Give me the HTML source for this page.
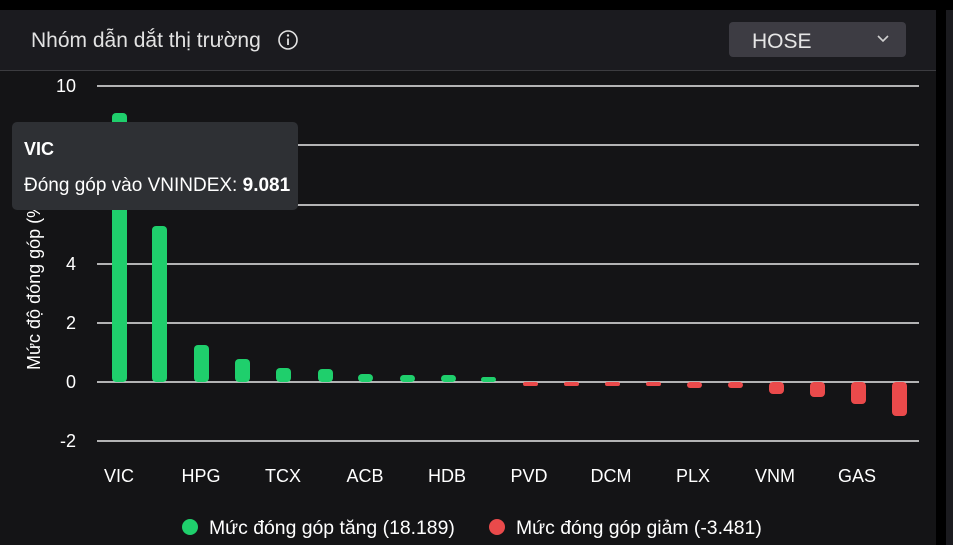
<!DOCTYPE html>
<html><head><meta charset="utf-8"><style>
html,body{margin:0;padding:0;background:#000;width:953px;height:545px;overflow:hidden;font-family:"Liberation Sans",sans-serif}
</style></head><body>
<svg width="953" height="545" xmlns="http://www.w3.org/2000/svg" style="position:absolute;left:0;top:0">
<rect x="0" y="0" width="953" height="545" fill="#000"/>
<rect x="0" y="10" width="936" height="535" fill="#141416"/>
<rect x="0" y="10" width="936" height="60" fill="#1b1b1f"/>
<rect x="946" y="10" width="7" height="535" fill="#1b1b1f"/>
<line x1="0" y1="70.5" x2="936" y2="70.5" stroke="#3c3c40"/>
<text x="31" y="47" fill="#e2e2e2" font-size="21">Nhóm dẫn dắt thị trường</text>
<circle cx="288" cy="40" r="9" fill="none" stroke="#e2e2e2" stroke-width="1.6"/>
<circle cx="288" cy="35.5" r="1.2" fill="#e2e2e2"/>
<line x1="288" y1="38.5" x2="288" y2="45" stroke="#e2e2e2" stroke-width="1.8"/>
<rect x="729" y="22" width="177" height="35" rx="4" fill="#3d3c43"/>
<text x="752" y="48" fill="#e6e6e6" font-size="21">HOSE</text>
<polyline points="878,36 883,41 888,36" fill="none" stroke="#d0d0d0" stroke-width="1.6"/>
<g stroke="#e8e8e8" stroke-width="1.5">
<line x1="97" y1="86" x2="919" y2="86"/><line x1="97" y1="145" x2="919" y2="145"/>
<line x1="97" y1="205" x2="919" y2="205"/><line x1="97" y1="264" x2="919" y2="264"/>
<line x1="97" y1="323" x2="919" y2="323"/><line x1="97" y1="382" x2="919" y2="382"/>
<line x1="97" y1="441" x2="919" y2="441"/>
</g>
<g fill="#fff" font-size="18" text-anchor="end">
<text x="76" y="92">10</text><text x="76" y="270">4</text><text x="76" y="329">2</text>
<text x="76" y="388">0</text><text x="76" y="447">-2</text>
</g>
<text transform="translate(40,370) rotate(-90)" fill="#fff" font-size="18">Mức độ đóng góp (%)</text>
<g fill="#1fcf6c">
<rect x="112" y="113" width="15" height="269" rx="4"/>
<rect x="152" y="226" width="15" height="156" rx="4"/>
<rect x="194" y="345" width="15" height="37" rx="4"/>
<rect x="235" y="359" width="15" height="23" rx="4"/>
<rect x="276" y="368" width="15" height="14" rx="4"/>
<rect x="318" y="369" width="15" height="13" rx="4"/>
<rect x="358" y="374" width="15" height="8" rx="4"/>
<rect x="400" y="375" width="15" height="7" rx="3.5"/>
<rect x="441" y="375" width="15" height="7" rx="3.5"/>
<rect x="481" y="377" width="15" height="5" rx="2.5"/>
</g>
<g fill="#ea4a4b">
<rect x="523" y="382" width="15" height="4" rx="2"/>
<rect x="564" y="382" width="15" height="4" rx="2"/>
<rect x="605" y="382" width="15" height="4" rx="2"/>
<rect x="646" y="382" width="15" height="4" rx="2"/>
<rect x="687" y="382" width="15" height="6" rx="3"/>
<rect x="728" y="382" width="15" height="6" rx="3"/>
<rect x="769" y="382" width="15" height="12" rx="4"/>
<rect x="810" y="382" width="15" height="15" rx="4"/>
<rect x="851" y="382" width="15" height="22" rx="4"/>
<rect x="892" y="382" width="15" height="34" rx="4"/>
</g>
<g fill="#fff" font-size="18" text-anchor="middle">
<text x="119" y="482">VIC</text><text x="201" y="482">HPG</text><text x="283" y="482">TCX</text>
<text x="365" y="482">ACB</text><text x="447" y="482">HDB</text><text x="529" y="482">PVD</text>
<text x="611" y="482">DCM</text><text x="693" y="482">PLX</text><text x="775" y="482">VNM</text>
<text x="857" y="482">GAS</text>
</g>
<circle cx="190" cy="527" r="8" fill="#1fcf6c"/>
<text x="209" y="534" fill="#fff" font-size="19.4">Mức đóng góp tăng (18.189)</text>
<circle cx="497" cy="527" r="8" fill="#ea4a4b"/>
<text x="516" y="534" fill="#fff" font-size="19.4">Mức đóng góp giảm (-3.481)</text>
<rect x="12" y="122" width="286" height="88" rx="5" fill="#2e3034"/>
<text x="24" y="155" fill="#fff" font-size="18" font-weight="bold">VIC</text>
<text x="24" y="191" fill="#fff" font-size="19">Đóng góp vào VNINDEX: <tspan font-weight="bold">9.081</tspan></text>
</svg>
</body></html>
